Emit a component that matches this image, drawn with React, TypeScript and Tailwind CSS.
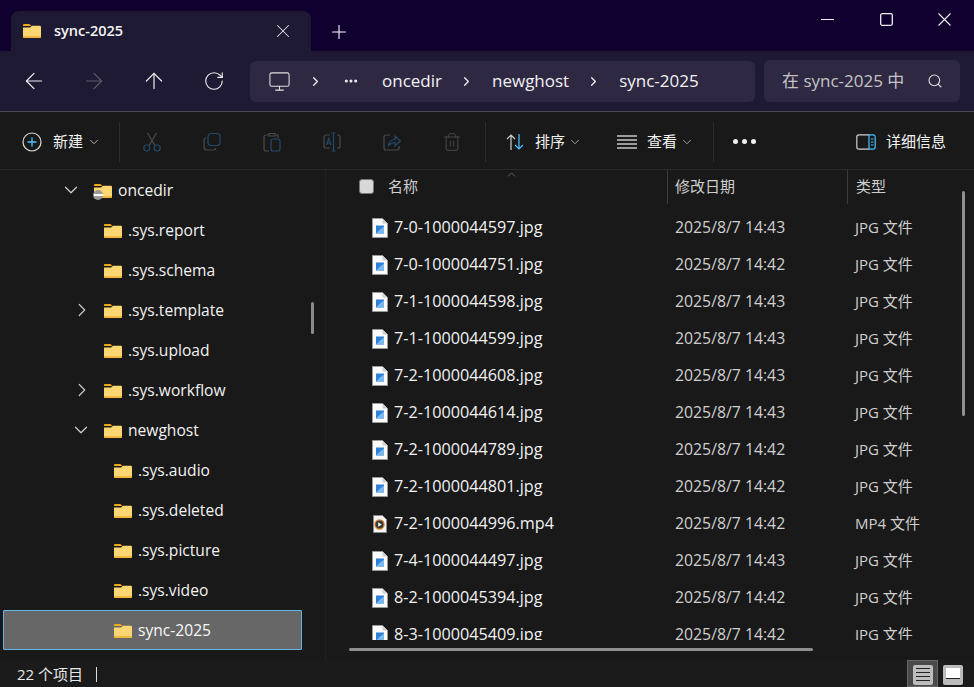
import { ArrowLeft, ArrowRight, ArrowUp, ChevronDown, ChevronRight, ChevronUp, Ellipsis, Monitor, Plus, RotateCw, Search, Trash2, X } from 'lucide-react';

const FONT = 'font-["Open_Sans","Noto_Sans_CJK_SC",sans-serif]';

const files = [
  ['7-0-1000044597.jpg', '2025/8/7 14:43', 'JPG 文件'],
  ['7-0-1000044751.jpg', '2025/8/7 14:42', 'JPG 文件'],
  ['7-1-1000044598.jpg', '2025/8/7 14:43', 'JPG 文件'],
  ['7-1-1000044599.jpg', '2025/8/7 14:43', 'JPG 文件'],
  ['7-2-1000044608.jpg', '2025/8/7 14:43', 'JPG 文件'],
  ['7-2-1000044614.jpg', '2025/8/7 14:43', 'JPG 文件'],
  ['7-2-1000044789.jpg', '2025/8/7 14:42', 'JPG 文件'],
  ['7-2-1000044801.jpg', '2025/8/7 14:42', 'JPG 文件'],
  ['7-2-1000044996.mp4', '2025/8/7 14:42', 'MP4 文件'],
  ['7-4-1000044497.jpg', '2025/8/7 14:43', 'JPG 文件'],
  ['8-2-1000045394.jpg', '2025/8/7 14:42', 'JPG 文件'],
  ['8-3-1000045409.jpg', '2025/8/7 14:42', 'JPG 文件'],
];

const tree = [
  { name: '.sys.report', pad: 'pl-[100px]' },
  { name: '.sys.schema', pad: 'pl-[100px]' },
  { name: '.sys.template', pad: 'pl-[100px]', arrow: 'right', arrowPad: 'left-[71px]' },
  { name: '.sys.upload', pad: 'pl-[100px]' },
  { name: '.sys.workflow', pad: 'pl-[100px]', arrow: 'right', arrowPad: 'left-[71px]' },
  { name: 'newghost', pad: 'pl-[100px]', arrow: 'down', arrowPad: 'left-[70px]' },
  { name: '.sys.audio', pad: 'pl-[110px]' },
  { name: '.sys.deleted', pad: 'pl-[110px]' },
  { name: '.sys.picture', pad: 'pl-[110px]' },
  { name: '.sys.video', pad: 'pl-[110px]' },
];

function FolderIcon({ className = '' }: { className?: string }) {
  return (
    <svg viewBox="0 0 18 14" className={`h-[14px] w-[18px] shrink-0 ${className}`}>
      <path d="M0 1.2C0 .5.5 0 1.2 0h4.6c.4 0 .7.1 1 .4L8.6 2H0z" fill="#f3a81c" />
      <path d="M0 3.4h7l2-1.6h7.8c.7 0 1.2.5 1.2 1.2v9.8c0 .7-.5 1.2-1.2 1.2H1.2C.5 14 0 13.500 0 12.800z" fill="#fcd672" />
      <path d="M0 12h18v.800c0 .7-.5 1.200-1.200 1.200H1.200C.5 14 0 13.500 0 12.800z" fill="#f0b93d" />
    </svg>
  );
}

function ImageFile() {
  return (
    <svg viewBox="0 0 16 20" className="h-[20px] w-[16px] shrink-0">
      <path d="M.5.5h10l5 5v14H.5z" fill="#fbfbfb" stroke="#9a9a9a" />
      <path d="M10.500.5v5h5z" fill="#d0d0d0" />
      <rect x="4" y="7.500" width="8" height="8" fill="#2f80d8" />
      <path d="M4 15.500l4-4 4-3v7z" fill="#7ab8ee" />
    </svg>
  );
}

function VideoFile() {
  return (
    <svg viewBox="0 0 14 18" className="h-[18px] w-[14px] shrink-0">
      <path d="M.5.5h9l4 4v13H.5z" fill="#f4f4f4" stroke="#8a8a8a" />
      <circle cx="6.500" cy="9.500" r="4.600" fill="#3a3a3a" stroke="#d9822b" strokeWidth="1.200" />
      <path d="M5.200 7.300l3.600 2.200-3.600 2.200z" fill="#f4f4f4" />
    </svg>
  );
}

function ToolIcon({ children }: { children: React.ReactNode }) {
  return (
    <svg viewBox="0 0 20 20" fill="none" strokeWidth="1.200" className="h-[20px] w-[20px] shrink-0">
      {children}
    </svg>
  );
}

function Toolbar() {
  return (
    <div className="flex h-[57px] shrink-0 items-center bg-[#191919] pl-[22px] pt-[2px] text-[15px] text-[#f2f2f2]">
      <svg viewBox="0 0 20 20" fill="none" className="h-[20px] w-[20px] shrink-0">
        <circle cx="10" cy="10" r="9" stroke="#dcdcdc" strokeWidth="1.200" />
        <path d="M10 5.500v9M5.500 10h9" stroke="#4cc2ff" strokeWidth="1.300" />
      </svg>
      <span className="ml-[11px]">新建</span>
      <ChevronDown size={14} strokeWidth={1.4} className="ml-[4px] text-[#cfcfcf]" />
      <div className="ml-[18px] h-[40px] w-px bg-[#2c2c2c]" />

      <div className="ml-[22px] flex items-center gap-[40px]">
        <ToolIcon>
          <path d="M7 13.500L14.500 1M13 13.500L5.500 1" stroke="#4b4b4b" />
          <circle cx="4.800" cy="16" r="3" stroke="#24496a" />
          <circle cx="15.200" cy="16" r="3" stroke="#24496a" />
        </ToolIcon>
        <ToolIcon>
          <rect x="6" y="1.500" width="12" height="12" rx="3" stroke="#24496a" />
          <path d="M4 5.500a3 3 0 0 0-2 2.800v6.700a3 3 0 0 0 3 3h6.500a3 3 0 0 0 2.500-2" stroke="#4b4b4b" />
        </ToolIcon>
        <ToolIcon>
          <path d="M6 3H4a2 2 0 0 0-2 2v12a2 2 0 0 0 2 2h3M14 3h2v3M7 1.500h6V4H7z" stroke="#4b4b4b" />
          <rect x="9" y="7" width="9" height="12" rx="2" stroke="#24496a" />
        </ToolIcon>
        <ToolIcon>
          <path d="M8 3H4a2 2 0 0 0-2 2v9a2 2 0 0 0 2 2h4M15 3h1a2 2 0 0 1 2 2v9a2 2 0 0 1-2 2h-1" stroke="#4b4b4b" />
          <path d="M11.500 1v18M9.500 1h4M9.500 19h4M4.500 13l2.200-6.500L9 13M5.300 11h3" stroke="#24496a" />
        </ToolIcon>
        <ToolIcon>
          <path d="M8 3H4a2 2 0 0 0-2 2v11a2 2 0 0 0 2 2h11a2 2 0 0 0 2-2v-2" stroke="#4b4b4b" />
          <path d="M6.500 13.500c.5-3.500 3-6 6.500-6V4l5.500 5-5.500 5v-3.500c-2.500 0-4.500 1-6.500 3z" stroke="#24496a" />
        </ToolIcon>
        <Trash2 size={20} strokeWidth={1.1} className="text-[#4b4b4b]" />
      </div>

      <div className="ml-[23px] h-[40px] w-px bg-[#2c2c2c]" />
      <svg viewBox="0 0 20 20" fill="none" className="ml-[19px] h-[20px] w-[20px] shrink-0" strokeWidth="1.200">
        <path d="M6 18V3M2 7l4-4 4 4" stroke="#cfcfcf" />
        <path d="M14 2v15M10 13l4 4 4-4" stroke="#4cc2ff" />
      </svg>
      <span className="ml-[10px]">排序</span>
      <ChevronDown size={14} strokeWidth={1.4} className="ml-[3px] text-[#bdbdbd]" />
      <svg viewBox="0 0 20 14" className="ml-[35px] h-[14px] w-[20px] shrink-0" stroke="#c8c8c8" strokeWidth="1.300">
        <path d="M0 1h20M0 5h20M0 9h20M0 13h20" />
      </svg>
      <span className="ml-[10px]">查看</span>
      <ChevronDown size={14} strokeWidth={1.4} className="ml-[3px] text-[#bdbdbd]" />
      <div className="ml-[19px] h-[40px] w-px bg-[#2c2c2c]" />
      <div className="ml-[19px] flex gap-[4px]">
        <span className="h-[5px] w-[5px] rounded-full bg-[#f0f0f0]" />
        <span className="h-[5px] w-[5px] rounded-full bg-[#f0f0f0]" />
        <span className="h-[5px] w-[5px] rounded-full bg-[#f0f0f0]" />
      </div>
      <svg viewBox="0 0 20 16" fill="none" className="ml-[100px] h-[16px] w-[20px] shrink-0" strokeWidth="1.200">
        <path d="M13 .8H3A2.200 2.200 0 0 0 .8 3v10A2.200 2.200 0 0 0 3 15.200h10" stroke="#cfcfcf" />
        <path d="M13 .8h4A2.200 2.200 0 0 1 19.200 3v10a2.200 2.200 0 0 1-2.200 2.200h-4zM15 5h2.500M15 8h2.500M15 11h2.500" stroke="#4cc2ff" />
      </svg>
      <span className="ml-[10px]">详细信息</span>
    </div>
  );
}

function NavPane() {
  return (
    <div className="relative w-[326px] shrink-0 overflow-hidden border-r border-[#222]">
      <div className="relative flex h-[40px] items-center pl-[94px] pt-[2px] text-[#f2f2f2]">
        <ChevronDown size={22} strokeWidth={1.3} className="absolute left-[60px] top-[9px] text-[#d0d0d0]" />
        <div className="relative">
          <FolderIcon />
          <span className="absolute -left-[1px] top-[6px] flex h-[10px] w-[10px] items-center justify-center rounded-full bg-[#999]">
            <span className="h-[2px] w-[9px] bg-white" />
          </span>
        </div>
        <span className="ml-[6px] text-[15.6px]">oncedir</span>
      </div>
      {tree.map((item) => (
        <div key={item.name} className={`relative flex h-[40px] items-center ${item.pad} pt-[2px] text-[#f2f2f2]`}>
          {item.arrow === 'right' && <ChevronRight size={22} strokeWidth={1.3} className={`absolute ${item.arrowPad} top-[9px] text-[#c8c8c8]`} />}
          {item.arrow === 'down' && <ChevronDown size={22} strokeWidth={1.3} className={`absolute ${item.arrowPad} top-[9px] text-[#d0d0d0]`} />}
          <FolderIcon className="ml-[4px]" />
          <span className="ml-[6px] text-[15.6px]">{item.name}</span>
        </div>
      ))}
      <div className="ml-[3px] flex h-[40px] w-[299px] items-center rounded-[1px] border border-[#60b8e8] bg-[#676767] pl-[110px] pt-[2px] text-[#f8f8f8]">
        <FolderIcon />
        <span className="ml-[6px] text-[15.6px]">sync-2025</span>
      </div>
      <div className="absolute left-[311px] top-[132px] h-[32px] w-[3px] rounded-full bg-[#8a8a8a]" />
    </div>
  );
}

function FileList() {
  return (
    <div className="relative min-w-0 flex-1 overflow-hidden">
      <div className="h-[39px]">
        <div className="flex h-[33px] items-center text-[15px] text-[#cfcfcf]">
          <span className="ml-[33px] h-[15px] w-[15px] rounded-[3px] border border-[#777] bg-[#d8d8d8]" />
          <span className="ml-[14px] w-[279px]">名称</span>
          <span className="h-[34px] w-px self-start bg-[#3a3a3a]" />
          <span className="ml-[7px] w-[172px]">修改日期</span>
          <span className="h-[34px] w-px self-start bg-[#3a3a3a]" />
          <span className="ml-[8px]">类型</span>
        </div>
      </div>
      <ChevronUp size={13} strokeWidth={1.2} className="absolute left-[179px] -top-[2px] text-[#888]" />
      <div className="h-[431px] overflow-hidden">
        {files.map(([name, date, type]) => (
          <div key={name} className="flex h-[37px] items-center text-[#f2f2f2]">
            <span className="ml-[46px] flex w-[16px] justify-center">{name.endsWith('mp4') ? <VideoFile /> : <ImageFile />}</span>
            <span className="ml-[6px] w-[281px] text-[16.200px]">{name}</span>
            <span className="w-[180px] text-[15.800px] text-[#cfcfcf]">{date}</span>
            <span className="text-[15px] text-[#cfcfcf]">{type}</span>
          </div>
        ))}
      </div>
      <div className="absolute left-[23px] top-[478px] h-[3px] w-[464px] rounded-full bg-[#8f8f8f]" />
      <div className="absolute right-[9px] top-[21px] h-[225px] w-[3px] rounded-full bg-[#8f8f8f]" />
    </div>
  );
}

export default function App() {
  return (
    <div className={`flex h-[687px] w-[974px] flex-col overflow-hidden bg-[#191919] ${FONT}`}>
      <div className="flex h-[51px] shrink-0 items-end bg-[#10002f] pl-[11px]">
        <div className="flex h-[40px] w-[300px] items-center rounded-t-[8px] bg-[#1f1a33] pl-[12px] pb-[1px]">
          <FolderIcon />
          <span className="ml-[13px] text-[14.500px] font-semibold text-[#f4f4f4]">sync-2025</span>
          <X size={22} strokeWidth={1.1} className="ml-[149px] text-[#dddddd]" />
        </div>
        <Plus size={22} strokeWidth={1.2} className="mb-[8px] ml-[17px] text-white" />
        <div className="ml-auto mb-[11px] flex items-center gap-[45.500px] pr-[23px] pb-[14px]">
          <svg viewBox="0 0 13 13" className="h-[13px] w-[13px]" stroke="#f0f0f0" strokeWidth="1"><path d="M0 6.500h13" /></svg>
          <svg viewBox="0 0 13 13" fill="none" className="h-[13px] w-[13px]" stroke="#f0f0f0" strokeWidth="1.300"><rect x=".7" y=".7" width="11.600" height="11.600" rx="1.500" /></svg>
          <svg viewBox="0 0 13 13" className="h-[13px] w-[13px]" stroke="#f0f0f0" strokeWidth="1.100"><path d="M.5.5l12 12M12.500.5l-12 12" /></svg>
        </div>
      </div>

      <div className="flex h-[61px] shrink-0 items-center border-b border-[#4a4a50] bg-[#1f1a33] pl-[21px]">
        <ArrowLeft size={26} strokeWidth={1.1} className="text-[#f0f0f0]" />
        <ArrowRight size={26} strokeWidth={1.1} className="ml-[34px] text-[#5c5a66]" />
        <ArrowUp size={26} strokeWidth={1.1} className="ml-[34px] text-[#f0f0f0]" />
        <RotateCw size={22} strokeWidth={1.2} className="ml-[36px] text-[#f0f0f0]" />
        <div className="ml-[25px] flex h-[41px] w-[505px] items-center rounded-[6px] bg-[#2e2843] text-[17px] text-[#f2f2f2]">
          <Monitor size={23} strokeWidth={1.1} className="ml-[18px] text-[#e0e0e0]" />
          <ChevronRight size={15} strokeWidth={2} className="ml-[16.500px]" />
          <Ellipsis size={16} strokeWidth={2.6} className="ml-[20.500px]" />
          <span className="ml-[23px]">oncedir</span>
          <ChevronRight size={15} strokeWidth={2} className="ml-[17.500px]" />
          <span className="ml-[17.500px]">newghost</span>
          <ChevronRight size={15} strokeWidth={2} className="ml-[16.500px]" />
          <span className="ml-[18.500px]">sync-2025</span>
        </div>
        <div className="ml-[9px] flex h-[42px] w-[196px] items-center rounded-[6px] bg-[#2e2843] pl-[18px] text-[17px] text-[#c4c4c4]">
          <span>在 sync-2025 中</span>
          <Search size={16} strokeWidth={1.6} className="ml-[23px] text-[#e0e0e0]" />
        </div>
      </div>

      <Toolbar />

      <div className="flex h-[490px] shrink-0 border-t border-[#2a2a2a]">
        <NavPane />
        <FileList />
      </div>

      <div className="flex h-[28px] shrink-0 items-center bg-[#1b1b1b] pl-[17px] text-[15px] text-[#e8e8e8]">
        <span className="mt-[2px]">22 个项目</span>
        <span className="ml-[13px] mt-[2px] h-[15px] w-px bg-[#dddddd]" />
        <div className="ml-auto flex items-end self-end pr-[11px]">
          <div className="flex h-[27px] w-[31px] items-center justify-center border border-[#666] bg-[#4a4a4a] pt-[2px]">
            <div className="flex h-[20px] w-[20px] flex-col justify-center gap-[3px] rounded-[2px] bg-[#bcbcbc] px-[3px]">
              <span className="h-px bg-[#222]" />
              <span className="h-px bg-[#222]" />
              <span className="h-px bg-[#222]" />
              <span className="h-px bg-[#222]" />
            </div>
          </div>
          <div className="mb-[2px] ml-[5px] flex h-[20px] w-[20px] items-start justify-center rounded-[2px] bg-[#bcbcbc] p-[3px]">
            <span className="h-[11px] w-full border-b border-[#222] bg-white" />
          </div>
        </div>
      </div>
    </div>
  );
}
